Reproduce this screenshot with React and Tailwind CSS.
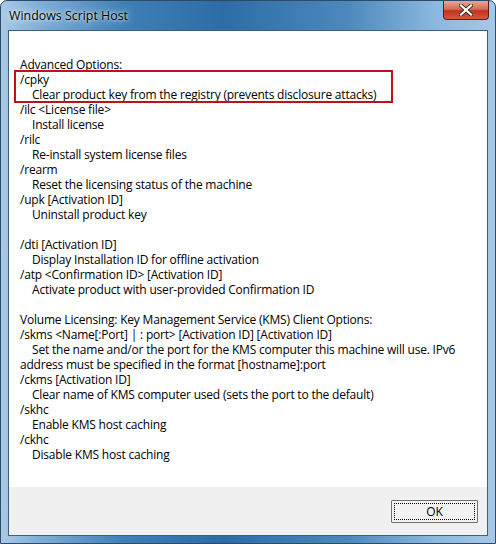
import React from "react";

const lines = [
  ["Advanced Options:", 0],
  ["/cpky", 0],
  ["Clear product key from the registry (prevents disclosure attacks)", 1],
  ["/ilc <License file>", 0],
  ["Install license", 1],
  ["/rilc", 0],
  ["Re-install system license files", 1],
  ["/rearm", 0],
  ["Reset the licensing status of the machine", 1],
  ["/upk [Activation ID]", 0],
  ["Uninstall product key", 1],
  ["", 0],
  ["/dti [Activation ID]", 0],
  ["Display Installation ID for offline activation", 1],
  ["/atp <Confirmation ID> [Activation ID]", 0],
  ["Activate product with user-provided Confirmation ID", 1],
  ["", 0],
  ["Volume Licensing: Key Management Service (KMS) Client Options:", 0],
  ["/skms <Name[:Port] | : port> [Activation ID] [Activation ID]", 0],
  ["Set the name and/or the port for the KMS computer this machine will use. IPv6", 1],
  ["address must be specified in the format [hostname]:port", 0],
  ["/ckms [Activation ID]", 0],
  ["Clear name of KMS computer used (sets the port to the default)", 1],
  ["/skhc", 0],
  ["Enable KMS host caching", 1],
  ["/ckhc", 0],
  ["Disable KMS host caching", 1],
];

function Line({ text, indent }) {
  return (
    <div className={`h-[15px] leading-[15px] whitespace-pre ${indent ? "pl-[12px]" : ""}`}>
      {text || "\u00a0"}
    </div>
  );
}

export default function App() {
  return (
    <div className="w-[496px] h-[544px] bg-white" style={{ fontFamily: '"Open Sans", "Noto Sans", sans-serif' }}>
      <div className="w-[496px] h-[544px] rounded-t-[7px] border border-[#2d4a66] bg-[linear-gradient(90deg,#a9c9e6_0%,#7eaed6_8%,#3f7fb6_25%,#2d6ca6_45%,#4c88bd_70%,#8bb8de_88%,#a7c8e6_100%)] flex flex-col px-[7px] pb-[7px]">
        <div className="h-[29px] flex items-start justify-between relative">
          <div className="pt-[7px] text-[12.4px] leading-[15px] text-black pl-[1px] [text-shadow:0_0_8px_rgba(255,255,255,0.9),0_0_3px_rgba(255,255,255,0.9)]">
            Windows Script Host
          </div>
          <div className="w-[46px] h-[19px] -mr-[1px] rounded-b-[4px] border border-[#5a1f1a] border-t-0 bg-[linear-gradient(180deg,#e8a598_0%,#d46d5b_45%,#c2321e_55%,#d65a3e_100%)] flex items-center justify-center">
            <svg width="14" height="12" viewBox="0 0 14 12">
              <path d="M2 1.5 L12 10.5 M12 1.5 L2 10.5" stroke="#3b2a2a" strokeWidth="4" strokeLinecap="square" />
              <path d="M2 1.5 L12 10.5 M12 1.5 L2 10.5" stroke="#ffffff" strokeWidth="2.2" strokeLinecap="square" />
            </svg>
          </div>
        </div>
        <div className="flex-1 flex flex-col border border-[#3f5f7f] bg-[#f0f0f0]">
          <div className="flex-1 bg-white pt-[26px] pl-[11px] text-[12px] tracking-[-0.2px] text-black relative">
            <div className="absolute left-[5px] top-[39px] w-[379px] h-[33px] border-2 border-[#c0101a]" />
            {lines.map(([t, i], k) => (
              <Line key={k} text={t} indent={i} />
            ))}
          </div>
          <div className="h-[48px] flex items-center justify-end pr-[9px]">
            <div className="w-[87px] h-[23px] border border-[#707070] bg-[#f2f2f2] p-[2px] rounded-[1px]">
              <div className="w-full h-full border border-dotted border-black flex items-center justify-center text-[12px] leading-[15px] text-black">
                OK
              </div>
            </div>
          </div>
        </div>
      </div>
    </div>
  );
}
